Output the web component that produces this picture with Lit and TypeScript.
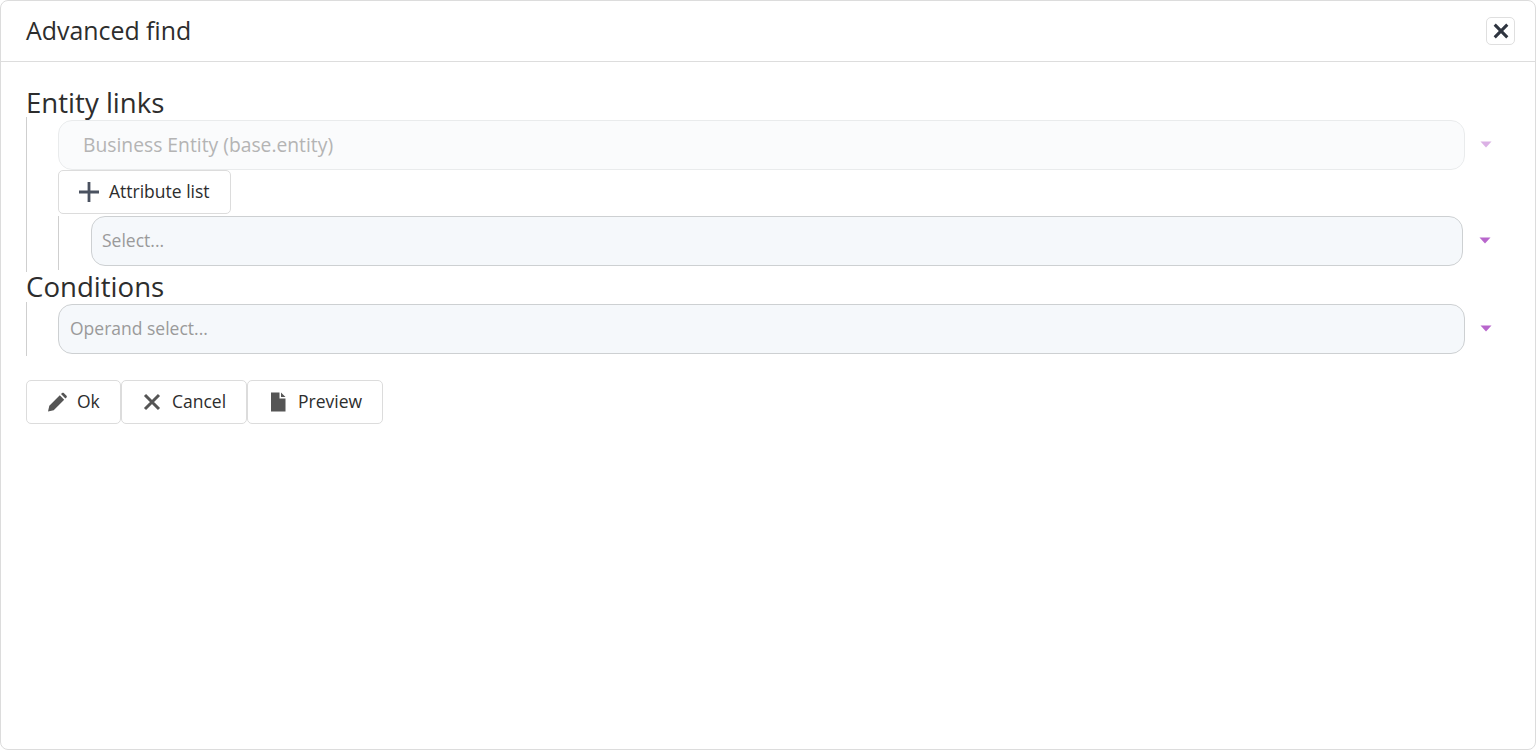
import { LitElement, html, css, svg } from "lit";
import { customElement } from "lit/decorators.js";

const plus = svg`<path d="M10 0v20M0 10h20" fill="none" stroke="#4a5260" stroke-width="2.8"/>`;
const cross = svg`<path d="M3 3l14 14M17 3L3 17" fill="none" stroke="#555" stroke-width="3"/>`;
const closeX = svg`<path d="M3 3l14 14M17 3L3 17" fill="none" stroke="#2f3540" stroke-width="3.4"/>`;
const pencil = svg`<path d="M1 19.500l1.300-5.700L12.800 3.300l4.400 4.400L6.700 18.200zM14 2.100l1.100-1.100c.5-.5 1.200-.5 1.700 0l2.700 2.700c.5.500.5 1.200 0 1.700l-1.100 1.100z" fill="#555"/>`;
const file = svg`<path d="M3 .5h8.500v6h6v13H3zM13 .5l4.500 4.500H13z" fill="#555"/>`;

@customElement("app-root")
export class AppRoot extends LitElement {
  static styles = css`
    :host { display: block; font-family: "Open Sans", sans-serif; color: #2d2d2d; }
    .dialog { box-sizing: border-box; height: 750px; border: 1px solid #dcdcdc; border-radius: 8px; background: #fff; overflow: hidden; }
    .header { box-sizing: border-box; height: 61px; border-bottom: 1px solid #dddddd; display: flex; align-items: center; justify-content: space-between; padding: 0 20px 0 25px; }
    .title { font-size: 24.9px; line-height: 30px; font-weight: 400; margin: 0 0 2px; }
    .close { box-sizing: border-box; width: 29px; height: 28px; border: 1px solid #dfdfdf; border-radius: 5px; background: #fff; padding: 0; display: flex; align-items: center; justify-content: center; }
    .close svg { width: 18px; height: 18px; }
    .body { padding: 25px 28px 0 25px; }
    h2 { font-size: 27.6px; line-height: 30px; font-weight: 400; margin: 0; color: #2d2d2d; }
    h2.second { line-height: 28px; margin-bottom: 2px; }
    .tree { border-left: 1px solid #cfcfcf; padding-left: 31px; }
    .links { height: 155px; padding-top: 3px; box-sizing: border-box; }
    .conds { height: 54px; padding-top: 2px; box-sizing: border-box; }
    .row { display: flex; align-items: stretch; }
    .select { box-sizing: border-box; flex: 1; height: 50px; border: 1px solid #cdd0d2; border-radius: 14px; background: #f5f8fb; color: #9a9a9a; font-size: 17.500px; display: flex; align-items: center; padding-left: 11px; padding-bottom: 2px; }
    .disabled { background: #fafbfc; border-color: #e9ebec; color: #b4b4b4; font-size: 19.300px; padding-left: 24px; }
    .caret { width: 42px; display: flex; align-items: center; justify-content: center; padding-bottom: 1px; }
    .caret svg { width: 12px; height: 7px; }
    .faded { opacity: .5; }
    .btn { box-sizing: border-box; height: 44px; border: 1px solid #dcdcdc; border-radius: 5px; background: #fff; color: #2d2d2d; display: inline-flex; align-items: center; font: 400 17.500px "Open Sans", sans-serif; padding: 0 0 2px; }
    .btn svg { width: 20px; height: 20px; flex: none; margin-top: 2px; }
    .attr { width: 173px; padding-left: 20px; gap: 10px; }
    .plus { width: 22px; height: 22px; }
    .sub { margin-top: 2px; height: 54px; border-left: 1px solid #cfcfcf; padding-left: 32px; margin-right: 1px; }
    .inner { padding-left: 10px; }
    .wide { width: 43px; }
    .actions { display: flex; margin-top: 24px; }
    .ok { width: 95px; padding-left: 20px; gap: 10px; }
    .cancel { width: 126px; padding-left: 20px; gap: 10px; }
    .preview { width: 136px; padding-left: 20px; gap: 10px; }
  `;

  private caret(extra = "") {
    return html`<div class="caret ${extra}"><svg viewBox="0 0 12 7"><path d="M0.500 0.500h11L6 6.500z" fill="#b866cc"/></svg></div>`;
  }

  render() {
    return html`
      <div class="dialog">
        <div class="header">
          <h1 class="title">Advanced find</h1>
          <button class="close"><svg viewBox="0 0 20 20">${closeX}</svg></button>
        </div>
        <div class="body">
          <h2>Entity links</h2>
          <div class="tree links">
            <div class="row">
              <div class="select disabled">Business Entity (base.entity)</div>
              ${this.caret("faded")}
            </div>
            <button class="btn attr"><svg class="plus" viewBox="0 0 20 20">${plus}</svg>Attribute list</button>
            <div class="sub">
              <div class="row">
                <div class="select inner">Select...</div>
                ${this.caret("wide")}
              </div>
            </div>
          </div>
          <h2 class="second">Conditions</h2>
          <div class="tree conds">
            <div class="row">
              <div class="select">Operand select...</div>
              ${this.caret()}
            </div>
          </div>
          <div class="actions">
            <button class="btn ok"><svg viewBox="0 0 20 20">${pencil}</svg>Ok</button>
            <button class="btn cancel"><svg viewBox="0 0 20 20">${cross}</svg>Cancel</button>
            <button class="btn preview"><svg viewBox="0 0 20 20">${file}</svg>Preview</button>
          </div>
        </div>
      </div>
    `;
  }
}
